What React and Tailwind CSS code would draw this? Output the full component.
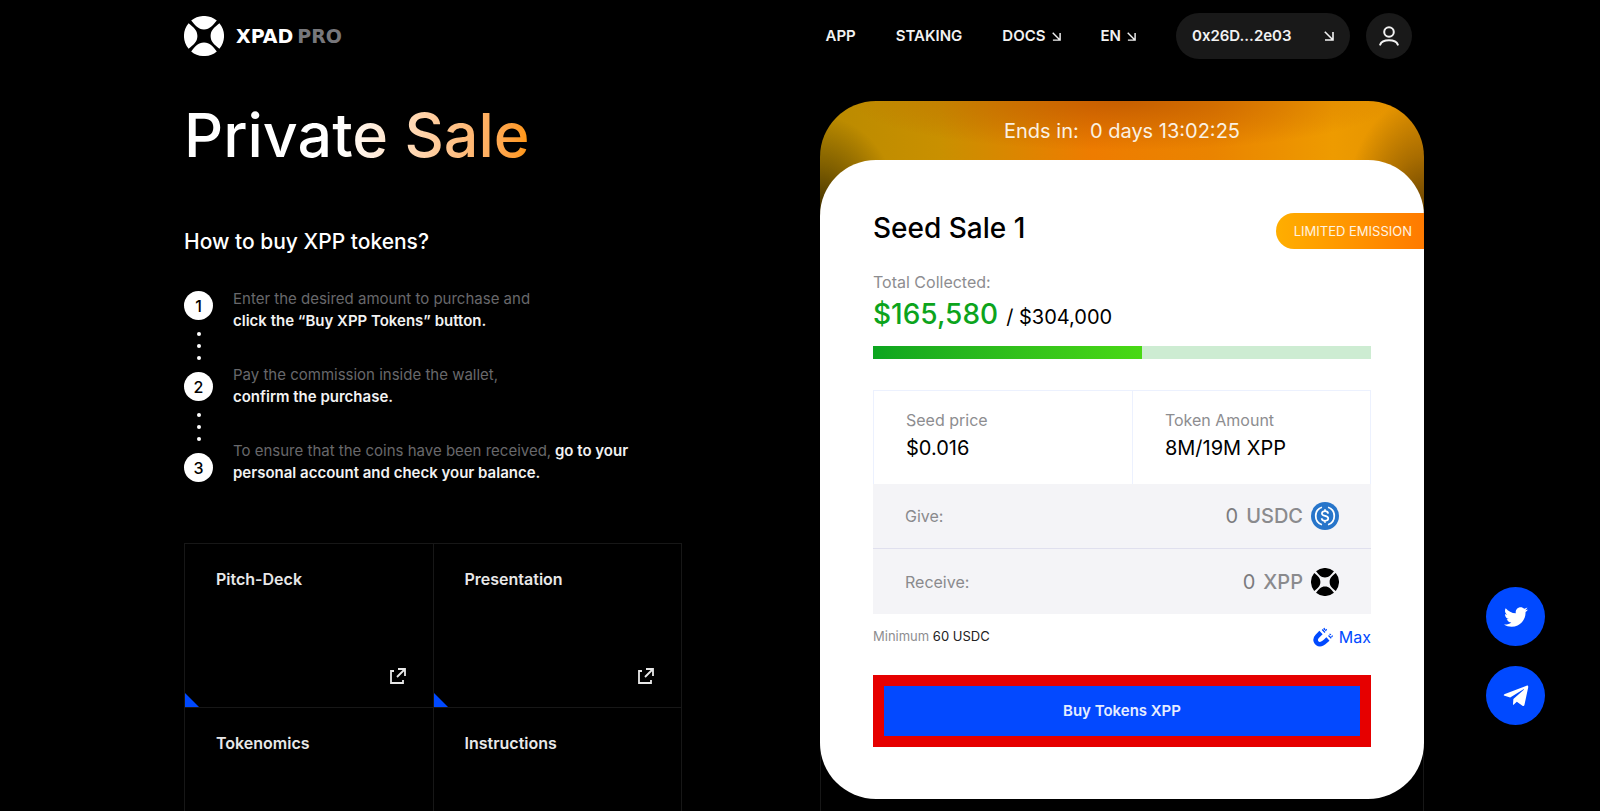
import { useState } from 'react';
import { FaTelegramPlane, FaTwitter } from 'react-icons/fa';

const steps = [
  { muted: 'Enter the desired amount to purchase and', strong: 'click the “Buy XPP Tokens” button.' },
  { muted: 'Pay the commission inside the wallet,', strong: 'confirm the purchase.' },
  {
    muted: 'To ensure that the coins have been received,',
    lead: 'go to your',
    strong: 'personal account and check your balance.',
  },
];

const documents = ['Pitch-Deck', 'Presentation', 'Tokenomics', 'Instructions'];

const stats = [
  { label: 'Seed price', value: '$0.016' },
  { label: 'Token Amount', value: '8M/19M XPP' },
];

const sale = { collected: 165580, goal: 304000 };

// One petal of the mark, repeated every 90 degrees
const petal = 'M-12.800 -15.400A20 20 0 0 1 12.800 -15.400C8.600 -10.400 6 -6.600 0 -6.600S-8.600 -10.400 -12.800 -15.400Z';

function XpadMark({ className }) {
  return (
    <svg viewBox="-20 -20 40 40" fill="currentColor" className={className} aria-hidden="true">
      {[0, 90, 180, 270].map((angle) => (
        <path key={angle} d={petal} transform={`rotate(${angle})`} />
      ))}
    </svg>
  );
}

function ArrowIcon({ className }) {
  return (
    <svg viewBox="0 0 10 10" fill="none" stroke="currentColor" strokeWidth="1.600" className={className} aria-hidden="true">
      <path d="M.8.8l8 8M9 1v8H1" />
    </svg>
  );
}

function UserIcon({ className }) {
  return (
    <svg viewBox="0 0 20 20" fill="none" stroke="currentColor" strokeWidth="2" strokeLinecap="round" className={className} aria-hidden="true">
      <circle cx="10" cy="6" r="4.800" />
      <path d="M1.200 18.600c1-2.800 4.600-4.400 8.800-4.400s7.800 1.600 8.800 4.400" />
    </svg>
  );
}

function OpenIcon({ className }) {
  return (
    <svg viewBox="0 0 16 16" fill="none" stroke="currentColor" strokeWidth="1.800" className={className} aria-hidden="true">
      <path d="M4 3H1v12h12v-3" />
      <path d="M7 9l7.500-7.500M8 1h7v7" />
    </svg>
  );
}

function UsdcIcon({ className }) {
  return (
    <svg viewBox="0 0 32 32" fill="none" className={className} aria-hidden="true">
      <circle cx="16" cy="16" r="16" fill="#2775ca" />
      <g stroke="#fff" strokeWidth="2">
        <path d="M12.500 6a10.600 10.600 0 0 0 0 20M19.500 6a10.600 10.600 0 0 1 0 20" />
        <path d="M19.600 13.200c-.2-1.700-1.500-2.700-3.600-2.700-2.200 0-3.500 1-3.500 2.600 0 3.900 7.200 1.700 7.200 5.600 0 1.700-1.400 2.800-3.700 2.800s-3.700-1.100-3.800-2.900M16 8.300v2.400M16 21.300v2.400" />
      </g>
    </svg>
  );
}

function MagnetIcon({ className }) {
  return (
    <svg viewBox="0 0 20 20" fill="none" stroke="currentColor" className={className} aria-hidden="true">
      <path d="M8 5.500L4.200 9.300C1 12.600 3.200 17.200 7 17.200c3 0 4.500-2.200 8-5.200" strokeWidth="4.600" />
      <path d="M9.200 2.500l2.800 3M11 1l.6 2M13.500 2l-1 2M15.500 8.500l2.800 2.700M16.500 7l1.500.8M19.600 8.500l-1 1.500" strokeWidth="1.300" />
    </svg>
  );
}

function Header() {
  return (
    <header className="flex items-center justify-between pt-[13px] pr-3">
      <a href="#home" className="flex items-center gap-3">
        <XpadMark className="size-10" />
        <span className="font-['DejaVu_Sans',sans-serif] text-[19px] font-bold">
          XPAD<span className="ml-1 text-[#77777b]">PRO</span>
        </span>
      </a>
      <div className="flex items-center gap-10 text-[15px] font-semibold text-[#f2f2f2]">
        <nav className="flex items-center gap-10">
          <a href="#app">APP</a>
          <a href="#staking">STAKING</a>
          <button type="button" aria-haspopup="menu" className="flex items-center gap-[6px]">
            DOCS
            <ArrowIcon className="size-[9px]" />
          </button>
          <label className="flex items-center gap-[6px]">
            <select aria-label="Language" defaultValue="EN" className="field-sizing-content appearance-none bg-black outline-none">
              <option>EN</option>
            </select>
            <ArrowIcon className="size-[9px]" />
          </label>
        </nav>
        <div className="flex gap-4">
          <button type="button" className="flex h-[46px] w-[174px] items-center justify-between rounded-full bg-[#191919] px-4">
            0x26D...2e03
            <ArrowIcon className="size-[10px]" />
          </button>
          <button type="button" aria-label="Account" className="flex size-[46px] items-center justify-center rounded-full bg-[#191919]">
            <UserIcon className="size-5" />
          </button>
        </div>
      </div>
    </header>
  );
}

function Steps() {
  return (
    <div className="mt-[30px] flex gap-5">
      <div className="flex flex-col items-center pt-[3px]" aria-hidden="true">
        {steps.map((step, index) => (
          <div key={step.strong} className="flex flex-col items-center">
            {index > 0 && (
              <div className="flex flex-col gap-2 py-3">
                <i className="size-1 rounded-full bg-white" />
                <i className="size-1 rounded-full bg-white" />
                <i className="size-1 rounded-full bg-white" />
              </div>
            )}
            <span className="flex size-[29px] items-center justify-center rounded-full bg-white font-medium text-black">
              {index + 1}
            </span>
          </div>
        ))}
      </div>
      <ol className="flex flex-col gap-8 text-[15px] leading-[22px]">
        {steps.map((step) => (
          <li key={step.strong} className="font-semibold text-[#f2f2f2]">
            <p>
              <span className="font-normal text-[#68686b]">{step.muted}</span> {step.lead}
            </p>
            <p>{step.strong}</p>
          </li>
        ))}
      </ol>
    </div>
  );
}

function DocumentGrid() {
  return (
    <div className="mt-[59px] grid grid-cols-2 border-t border-l border-[#171717]">
      {documents.map((title) => (
        <a
          key={title}
          href="#docs"
          className="relative flex h-[164px] flex-col justify-between border-r border-b border-[#171717] pt-[23px] pr-[27px] pb-[23px] pl-[31px] font-semibold text-[#e8e8e8]"
        >
          {title}
          <OpenIcon className="size-4 self-end" />
          <svg viewBox="0 0 14 14" className="absolute bottom-0 left-0 size-[14px]" aria-hidden="true">
            <path d="M0 0l14 14H0z" fill="#0049ff" />
          </svg>
        </a>
      ))}
    </div>
  );
}

function AmountRow({ id, label, unit, value, onChange, readOnly, children }) {
  return (
    <div className="flex h-[65px] items-center bg-[#f4f4f7] px-8 text-[#8a8a8d]">
      <label htmlFor={id}>{label}</label>
      <div className="ml-auto flex items-center gap-2 text-xl">
        <input
          id={id}
          inputMode="decimal"
          placeholder="0"
          value={value}
          onChange={onChange}
          readOnly={readOnly}
          className="w-40 bg-transparent text-right outline-none placeholder:text-[#7b7b7e]"
        />
        <span className="font-medium">{unit}</span>
        {children}
      </div>
    </div>
  );
}

function SaleCard() {
  const [amount, setAmount] = useState('');
  const received = amount ? String(Math.floor(Number(amount) / 0.016) || 0) : '';

  return (
    <section className="flex flex-col">
      <p className="rounded-t-[56px] bg-[radial-gradient(ellipse_80px_100px_at_0%_100%,#000000b0,#00000050_50%,transparent),radial-gradient(ellipse_80px_120px_at_100%_100%,#00000090,#00000040_50%,transparent),radial-gradient(ellipse_45%_50px_at_50%_0%,#b04c00a0,transparent),linear-gradient(90deg,#b98a00,#c99000_20%,#ee7c00_45%,#ea8400_65%,#ee9b00_85%,#e09000)] pt-4 pb-[71px] text-center text-xl leading-7 text-[#fbf1e2]">
        Ends in: &nbsp;0 days 13:02:25
      </p>
      <div className="relative z-10 -mt-14 rounded-[56px] bg-white pb-[52px] text-black">
        <div className="flex items-start justify-between pt-[53px] pl-[53px]">
          <h2 className="text-[28px] leading-[30px] font-medium">Seed Sale 1</h2>
          <span className="rounded-l-full bg-linear-to-r from-[#ffae00] to-[#ff7a00] pr-3 pl-[18px] text-[13px] leading-9 text-[#fff3e0]">
            LIMITED EMISSION
          </span>
        </div>
        <div className="px-[53px]">
          <p className="mt-[21px] text-[#8d8d90]">Total Collected:</p>
          <p className="text-xl leading-10">
            <span className="mr-2 text-[28px] font-medium text-[#0ca41c]">${sale.collected.toLocaleString('en-US')}</span>
            / ${sale.goal.toLocaleString('en-US')}
          </p>
          <div role="progressbar" aria-label="Total collected" aria-valuenow={54} className="mt-[9px] h-[13px] bg-[#cdecd2]">
            <div
              className="h-full bg-linear-to-r from-[#0ba51f] to-[#49d914]"
              style={{ width: `${Math.floor((sale.collected / sale.goal) * 100)}%` }}
            />
          </div>
          <dl className="mt-[31px] grid grid-cols-[13fr_12fr] border border-b-0 border-[#ecf1fe]">
            {stats.map((stat) => (
              <div key={stat.label} className="px-8 pt-[17px] pb-5 not-first:border-l not-first:border-[#ecf1fe]">
                <dt className="text-[#8d8d90]">{stat.label}</dt>
                <dd className="text-xl leading-8">{stat.value}</dd>
              </div>
            ))}
          </dl>
          <div className="divide-y divide-[#e0e0ee]">
            <AmountRow id="give" label="Give:" unit="USDC" value={amount} onChange={(e) => setAmount(e.target.value)}>
              <UsdcIcon className="size-7" />
            </AmountRow>
            <AmountRow id="receive" label="Receive:" unit="XPP" value={received} readOnly>
              <XpadMark className="size-7 text-black" />
            </AmountRow>
          </div>
          <div className="mt-[11px] flex items-center justify-between">
            <p className="text-[13px] text-[#8d8d90]">
              Minimum <span className="text-[#222]">60 USDC</span>
            </p>
            <button type="button" className="flex items-center gap-[6px] text-[#0049ff]" onClick={() => setAmount('60')}>
              <MagnetIcon className="size-5" />
              Max
            </button>
          </div>
          <div className="mt-[26px] border-[11px] border-[#e60000]">
            <button type="button" className="h-[50px] w-full bg-[#0349ff] text-[15px] font-semibold text-[#e6edff]">
              Buy Tokens XPP
            </button>
          </div>
        </div>
      </div>
      {/* Side rails continuing below the card */}
      <div className="-mt-14 min-h-14 grow border-x border-[#171717]" />
    </section>
  );
}

function SocialLinks() {
  return (
    <div className="fixed right-[55px] bottom-[86px] flex flex-col gap-5 text-white">
      <a href="#twitter" aria-label="Twitter" className="flex size-[59px] items-center justify-center rounded-full bg-[#0049ff]">
        <FaTwitter className="size-6" />
      </a>
      <a href="#telegram" aria-label="Telegram" className="flex size-[59px] items-center justify-center rounded-full bg-[#0049ff]">
        <FaTelegramPlane className="size-7" />
      </a>
    </div>
  );
}

export default function App() {
  return (
    <div className="min-h-screen overflow-hidden bg-black font-['Inter',sans-serif] text-base text-white">
      <div className="mx-auto max-w-[1248px] pl-2">
        <Header />
        <main className="mt-[42px] grid grid-cols-[498fr_604fr] gap-[138px]">
          <div>
            <h1 className="w-fit bg-linear-to-r from-white from-45% to-[#ff9500] bg-clip-text text-[61px] leading-[68px] font-medium text-transparent">
              Private Sale
            </h1>
            <h2 className="mt-[57px] text-[21px] leading-8 font-medium">How to buy XPP tokens?</h2>
            <Steps />
            <DocumentGrid />
          </div>
          <SaleCard />
        </main>
      </div>
      <SocialLinks />
    </div>
  );
}
